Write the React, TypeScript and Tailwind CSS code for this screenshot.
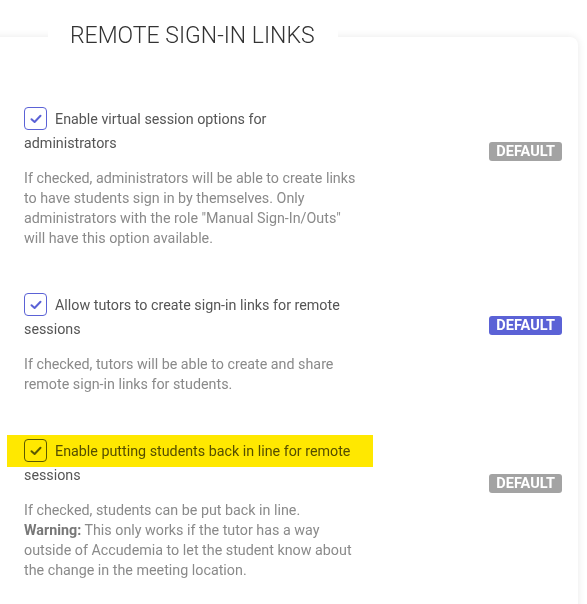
import type { ReactNode } from "react";

interface Setting {
  id: number;
  label: string;
  description: ReactNode;
  badgeClass: string;
  badgeOffset: string;
  highlighted?: boolean;
}

const settings: Setting[] = [
  {
    id: 1,
    label: "Enable virtual session options for administrators",
    description:
      'If checked, administrators will be able to create links to have students sign in by themselves. Only administrators with the role "Manual Sign-In/Outs" will have this option available.',
    badgeClass: "bg-[#a3a3a3]",
    badgeOffset: "mt-[35px]",
  },
  {
    id: 2,
    label: "Allow tutors to create sign-in links for remote sessions",
    description:
      "If checked, tutors will be able to create and share remote sign-in links for students.",
    badgeClass: "bg-[#5b62d6]",
    badgeOffset: "mt-[23px]",
  },
  {
    id: 3,
    label: "Enable putting students back in line for remote sessions",
    description: (
      <>
        If checked, students can be put back in line.
        <br />
        <b className="font-bold text-[#777]">Warning:</b> This only works if the tutor has a way
        outside of Accudemia to let the student know about the change in the meeting location.
      </>
    ),
    badgeClass: "bg-[#a3a3a3]",
    badgeOffset: "mt-[35px]",
    highlighted: true,
  },
];

function CheckBox() {
  return (
    <span className="mr-2 inline-flex h-[23px] w-[23px] items-center justify-center rounded-[4px] border-[1.5px] border-[#5b62d6] bg-white align-top">
      <svg width="12" height="10" viewBox="0 0 12 10" fill="none">
        <path
          d="M1.5 5.2 L4.6 8 L10.5 1.8"
          stroke="#5b62d6"
          strokeWidth="2"
          strokeLinecap="round"
          strokeLinejoin="round"
        />
      </svg>
    </span>
  );
}

function SettingRow({ setting }: { setting: Setting }) {
  return (
    <div className="flex">
      <div className="w-[334px]">
        <label className="relative block w-[330px] text-[14.3px] leading-[24px] text-[#555]">
          <CheckBox />
          {setting.label}
          {setting.highlighted && (
            <span className="pointer-events-none absolute left-[-17px] top-[-4px] h-[32px] w-[366px] bg-[#ffe800] mix-blend-multiply" />
          )}
        </label>
        <p className="mt-[13px] text-[14.3px] leading-[20px] text-[#8a8a8a]">
          {setting.description}
        </p>
      </div>
      <div className={`ml-auto mr-[16px] ${setting.badgeOffset}`}>
        <span
          className={`block rounded-[3px] px-[7px] text-[14.5px] font-bold leading-[19px] text-white ${setting.badgeClass}`}
        >
          DEFAULT
        </span>
      </div>
    </div>
  );
}

export default function App() {
  return (
    <div className="min-h-[604px] overflow-hidden bg-white font-['Roboto',sans-serif]">
      <div className="relative ml-[-10px] mt-[37px] w-[588px] rounded-tr-[8px] bg-white pb-10 pl-[34px] pt-[70px] shadow-[0_0_8px_rgba(0,0,0,0.09)]">
        <div className="absolute left-[58px] top-[-18px] bg-white pl-[22px] pr-[23px] py-[3px]">
          <h2 className="text-[23px] font-light leading-[28px] text-[#333]">
            REMOTE SIGN-IN LINKS
          </h2>
        </div>
        <div className="flex flex-col gap-[45px]">
          {settings.map((s) => (
            <SettingRow key={s.id} setting={s} />
          ))}
        </div>
      </div>
    </div>
  );
}
